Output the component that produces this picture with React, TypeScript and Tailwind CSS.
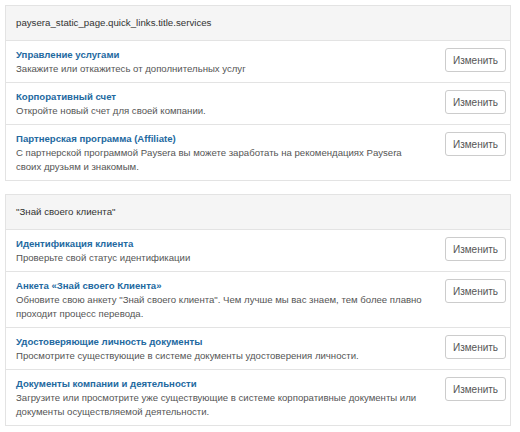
import React from "react";

type Item = { title: string; text: string };

const services: Item[] = [
  { title: "Управление услугами", text: "Закажите или откажитесь от дополнительных услуг" },
  { title: "Корпоративный счет", text: "Откройте новый счет для своей компании." },
  {
    title: "Партнерская программа (Affiliate)",
    text: "С партнерской программой Paysera вы можете заработать на рекомендациях Paysera своих друзьям и знакомым.",
  },
];

const kyc: Item[] = [
  { title: "Идентификация клиента", text: "Проверьте свой статус идентификации" },
  {
    title: "Анкета «Знай своего Клиента»",
    text: 'Обновите свою анкету "Знай своего клиента". Чем лучше мы вас знаем, тем более плавно проходит процесс перевода.',
  },
  {
    title: "Удостоверяющие личность документы",
    text: "Просмотрите существующие в системе документы удостоверения личности.",
  },
  {
    title: "Документы компании и деятельности",
    text: "Загрузите или просмотрите уже существующие в системе корпоративные документы или документы осуществляемой деятельности.",
  },
];

const Row = ({ item }: { item: Item }) => (
  <div className="flex items-start gap-[16px] border-t border-[#e3e3e3] pl-[10px] pr-[4px] pt-[6px] pb-[6px]">
    <div className="flex-1">
      <div className="text-[9.6px] leading-[15px] font-bold text-[#23699f]">{item.title}</div>
      <div className="text-[9.6px] leading-[14px] text-[#555]">{item.text}</div>
    </div>
    <button className="mt-[1px] h-[24px] w-[61px] shrink-0 rounded-[3px] border border-[#ccc] bg-white text-[10px] text-[#555]">
      Изменить
    </button>
  </div>
);

const Panel = ({ title, items }: { title: string; items: Item[] }) => (
  <div className="border border-[#e3e3e3]">
    <div className="flex h-[34px] items-center bg-[#f5f5f5] px-[10px] text-[9.7px] text-[#333]">{title}</div>
    {items.map((it) => (
      <Row key={it.title} item={it} />
    ))}
  </div>
);

export default function App() {
  return (
    <div
      className="flex flex-col gap-[13px] bg-white pt-[5px] pl-[5px] pr-[9px]"
      style={{ fontFamily: '"Liberation Sans", Arial, sans-serif' }}
    >
      <Panel title="paysera_static_page.quick_links.title.services" items={services} />
      <Panel title={'"Знай своего клиента"'} items={kyc} />
    </div>
  );
}
